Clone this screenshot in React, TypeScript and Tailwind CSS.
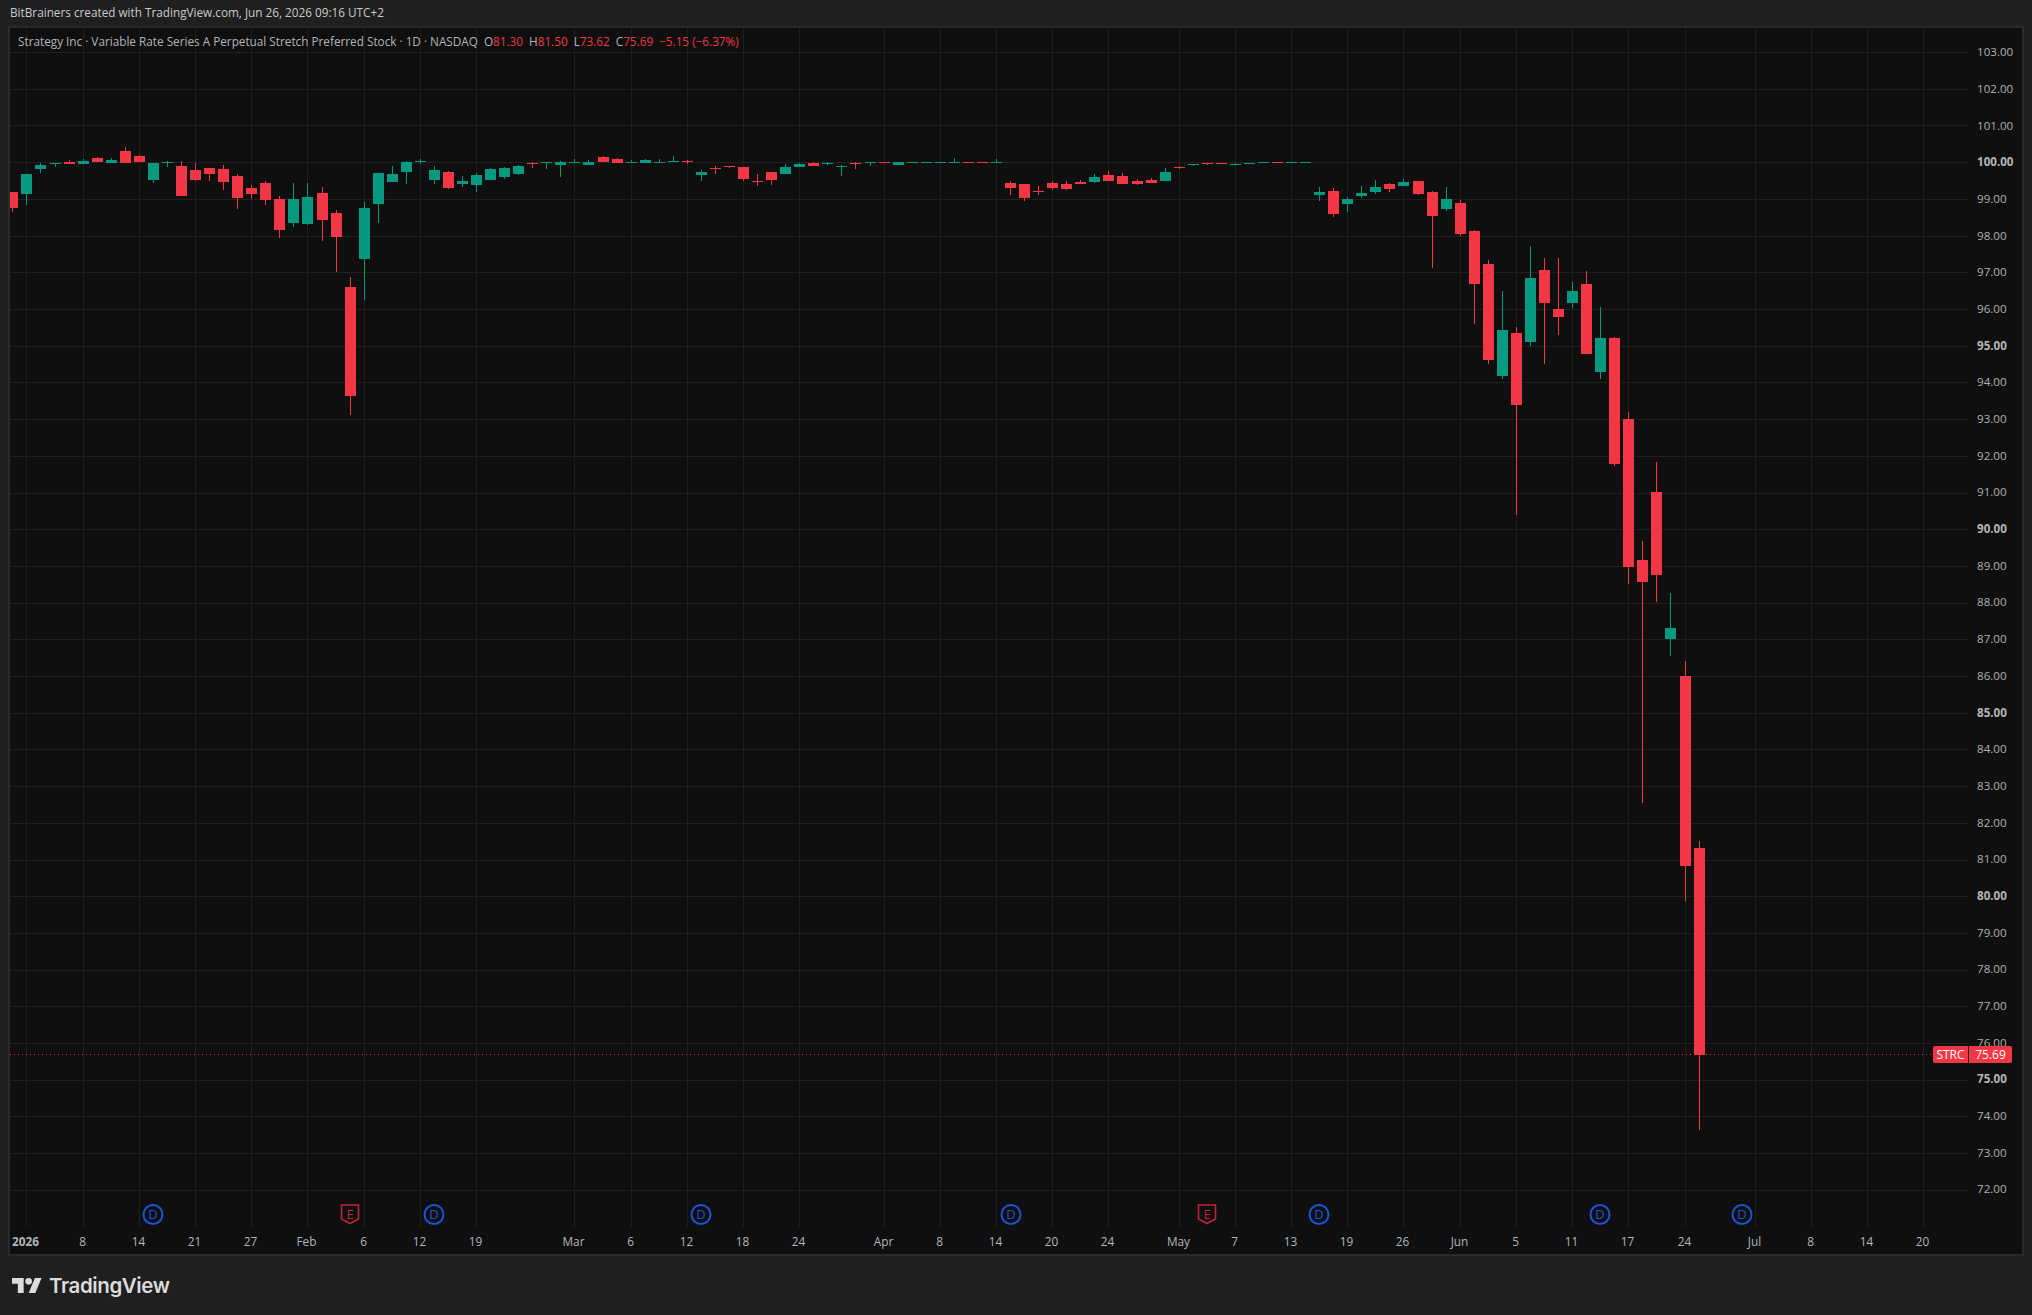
import * as React from 'react'

const RED = '#f23645'
const GREEN = '#089981'

// g/r, wick top, body top, body bottom, wick bottom, in thirds of a px from y=140
type Bar = ['g' | 'r', number, number, number, number]

const BARS: Bar[] = [
  ['r', 156, 156, 204, 216], ['g', 102, 102, 162, 195], ['g', 69, 75, 87, 99], ['g', 69, 69, 72, 81],
  ['r', 60, 66, 72, 72], ['g', 57, 63, 72, 72], ['r', 51, 54, 66, 66], ['g', 54, 60, 69, 69],
  ['r', 21, 33, 69, 69], ['r', 45, 48, 66, 66], ['g', 69, 69, 120, 129], ['g', 63, 66, 69, 81],
  ['r', 63, 78, 168, 168], ['r', 69, 90, 120, 123], ['r', 84, 84, 102, 123], ['r', 75, 87, 126, 150],
  ['r', 102, 108, 174, 207], ['r', 135, 144, 162, 177], ['r', 123, 129, 180, 195], ['r', 168, 177, 270, 294],
  ['g', 129, 177, 249, 261], ['g', 129, 171, 252, 255], ['r', 141, 159, 240, 303], ['r', 210, 219, 291, 396],
  ['r', 411, 441, 768, 825], ['g', 186, 204, 357, 480], ['g', 99, 99, 192, 249], ['g', 78, 102, 126, 126],
  ['g', 63, 66, 96, 132], ['g', 57, 63, 66, 72], ['g', 78, 90, 120, 132], ['r', 93, 96, 144, 147],
  ['g', 108, 123, 132, 141], ['g', 99, 105, 135, 156], ['g', 84, 87, 120, 120], ['g', 81, 84, 111, 117],
  ['g', 75, 78, 102, 105], ['r', 66, 69, 72, 84], ['g', 66, 66, 69, 87], ['g', 63, 66, 75, 111],
  ['g', 57, 66, 69, 69], ['g', 60, 66, 75, 75], ['r', 48, 51, 66, 66], ['r', 54, 57, 69, 69],
  ['g', 60, 66, 69, 69], ['g', 57, 60, 69, 69], ['g', 57, 66, 69, 69], ['g', 48, 63, 66, 66],
  ['r', 60, 63, 66, 72], ['g', 90, 96, 105, 123], ['r', 78, 84, 87, 102], ['r', 78, 78, 81, 84],
  ['r', 81, 81, 117, 123], ['r', 102, 123, 126, 138], ['r', 96, 96, 120, 135], ['g', 72, 81, 102, 102],
  ['g', 69, 72, 81, 81], ['r', 66, 69, 78, 78], ['g', 66, 69, 72, 75], ['g', 75, 78, 81, 108],
  ['r', 66, 69, 72, 87], ['g', 66, 66, 69, 78], ['r', 66, 66, 69, 69], ['g', 66, 66, 75, 75],
  ['g', 66, 66, 69, 69], ['g', 66, 66, 69, 69], ['g', 66, 66, 69, 69], ['g', 54, 66, 69, 69],
  ['r', 66, 66, 69, 69], ['r', 66, 66, 69, 69], ['g', 57, 66, 69, 69], ['r', 123, 129, 144, 165],
  ['r', 132, 132, 174, 183], ['r', 138, 153, 156, 165], ['r', 123, 129, 144, 150], ['r', 123, 132, 147, 150],
  ['r', 120, 126, 132, 132], ['g', 102, 111, 126, 129], ['r', 93, 105, 123, 123], ['r', 99, 108, 132, 132],
  ['r', 117, 123, 132, 135], ['r', 114, 120, 129, 129], ['g', 84, 96, 123, 123], ['r', 78, 81, 84, 87],
  ['g', 72, 72, 75, 78], ['r', 69, 69, 72, 75], ['r', 69, 69, 72, 72], ['g', 69, 72, 75, 75],
  ['g', 69, 69, 72, 72], ['g', 66, 66, 69, 69], ['r', 66, 66, 69, 69], ['g', 66, 66, 69, 69],
  ['g', 66, 66, 69, 69], ['g', 141, 156, 165, 183], ['r', 144, 153, 222, 231], ['g', 171, 177, 192, 216],
  ['g', 138, 159, 168, 174], ['g', 120, 141, 156, 162], ['r', 129, 132, 147, 156], ['g', 117, 126, 138, 138],
  ['r', 123, 123, 162, 165], ['r', 153, 156, 228, 384], ['g', 141, 177, 207, 213], ['r', 180, 189, 282, 288],
  ['r', 270, 273, 432, 552], ['r', 360, 372, 660, 672], ['g', 453, 570, 708, 717], ['r', 561, 579, 795, 1124],
  ['g', 318, 414, 606, 618], ['r', 354, 390, 489, 672], ['r', 354, 507, 531, 585], ['g', 426, 453, 489, 504],
  ['r', 393, 432, 642, 642], ['g', 501, 594, 696, 717], ['r', 591, 594, 972, 978], ['r', 816, 837, 1281, 1332],
  ['r', 1203, 1260, 1326, 1988], ['r', 966, 1056, 1305, 1386], ['g', 1359, 1464, 1497, 1548], ['r', 1563, 1608, 2178, 2283],
  ['r', 2103, 2124, 2744, 2970],
]

// bars sit 14px apart with one extra pixel at these indexes
const STEPS = [3, 22, 42, 61, 80, 100, 119]
const barX = (i: number) => 12.5 + 14 * i + STEPS.filter((s) => i >= s).length
const barY = (z: number) => Math.round(140 + z / 3)

const TICKS: [string, number, boolean?][] = [
  ['2026', 26.5, true], ['8', 83.5], ['14', 139.5], ['21', 195.5], ['27', 251.5], ['Feb', 307.5], ['6', 364.5],
  ['12', 420.5], ['19', 476.5], ['Mar', 574.5], ['6', 631.5], ['12', 687.5], ['18', 743.5], ['24', 799.5],
  ['Apr', 884.5], ['8', 940.5], ['14', 996.5], ['20', 1052.5], ['24', 1108.5], ['May', 1179.5], ['7', 1235.5],
  ['13', 1291.5], ['19', 1347.5], ['26', 1403.5], ['Jun', 1460.5], ['5', 1516.5], ['11', 1572.5], ['17', 1628.5],
  ['24', 1685.5], ['Jul', 1755.5], ['8', 1811.5], ['14', 1867.5], ['20', 1923.5],
]

const PRICES = Array.from({ length: 32 }, (_, i) => 103 - i)
const priceY = (p: number) => Math.floor(162.7 + (100 - p) * 36.7) + 0.5

const DIVIDENDS = [153, 434, 701, 1011, 1319, 1600, 1742]
const EARNINGS = [350, 1207]

const FONT = { fontFamily: '"Open Sans", sans-serif' }

function Candle({ bar, x }: { bar: Bar; x: number }) {
  const [kind, wickTop, top, bottom, wickBottom] = bar
  const color = kind === 'g' ? GREEN : RED
  return (
    <g>
      <rect x={x - 0.5} y={barY(wickTop)} width={1} height={barY(wickBottom) - barY(wickTop)} fill={color} />
      <rect x={x - 5.5} y={barY(top)} width={11} height={Math.max(1, barY(bottom) - barY(top))} fill={color} />
    </g>
  )
}

function ChartCanvas() {
  return (
    <svg viewBox="10 28 1958 1226" className="h-[1226px] w-[1958px] shrink-0">
      {TICKS.map(([label, x]) => (
        <line key={`${label}-${x}`} x1={x} x2={x} y1={28} y2={1227} stroke="#1e1e1e" />
      ))}
      {PRICES.map((p) => (
        <line key={p} x1={10} x2={1968} y1={priceY(p)} y2={priceY(p)} stroke="#202020" />
      ))}
      <line x1={10} x2={1933} y1={1054.5} y2={1054.5} stroke={RED} strokeDasharray="1 3" />
      {BARS.map((bar, i) => (
        <Candle key={i} bar={bar} x={barX(i)} />
      ))}

      {DIVIDENDS.map((x) => (
        <g key={x}>
          <circle cx={x} cy={1214.5} r={9.5} fill="none" stroke="#1b54d8" strokeWidth={2} />
          <text x={x} y={1219} textAnchor="middle" fontSize={13} fill="#1b54d8" style={FONT}>
            D
          </text>
        </g>
      ))}
      {EARNINGS.map((x) => (
        <g key={x}>
          <path
            d={`M${x - 8.5} 1205h17v14l-8.5 4.5l-8.5 -4.5z`}
            fill="none"
            stroke="#c2233a"
            strokeWidth={1.6}
          />
          <text x={x} y={1219} textAnchor="middle" fontSize={13} fill="#c2233a" style={FONT}>
            E
          </text>
        </g>
      ))}

      {TICKS.map(([label, x, bold]) => (
        <text
          key={`t-${label}-${x}`}
          x={x - 1}
          y={1245.5}
          textAnchor="middle"
          fontSize={11.8}
          fontWeight={bold ? 700 : 400}
          fill="#b4b6bb"
          style={FONT}
        >
          {label}
        </text>
      ))}
    </svg>
  )
}

function PriceAxis() {
  return (
    <div className="flex w-[54px] shrink-0 flex-col pt-[5.5px] pl-[9px] font-['Open_Sans',sans-serif] text-[11.6px] text-[#aeb0b5]">
      {PRICES.map((p) => (
        <div
          key={p}
          className={`flex h-[36.7px] shrink-0 items-center ${p % 5 === 0 ? 'font-bold text-[#b4b6ba]' : ''}`}
        >
          {p.toFixed(2)}
        </div>
      ))}
    </div>
  )
}

function Legend() {
  return (
    <div className="absolute top-[4px] left-[8px] flex gap-[6px] font-['Open_Sans',sans-serif] text-[11.75px] leading-[18px] text-[#b2b4b9]">
      <span>Strategy Inc · Variable Rate Series A Perpetual Stretch Preferred Stock · 1D · NASDAQ</span>
      <span>
        O<span className="text-[#f23645]">81.30</span>
      </span>
      <span>
        H<span className="text-[#f23645]">81.50</span>
      </span>
      <span>
        L<span className="text-[#f23645]">73.62</span>
      </span>
      <span>
        C<span className="text-[#f23645]">75.69</span>
      </span>
      <span className="text-[#f23645]">−5.15 (−6.37%)</span>
    </div>
  )
}

function LastPrice() {
  return (
    <div className="absolute top-[1018px] left-[1923px] flex h-[17px] gap-[1px] font-['Open_Sans',sans-serif] text-[12px] leading-[17px] text-white">
      <span className="w-[35px] rounded-l-[2px] bg-[#f23645] text-center">STRC</span>
      <span className="w-[43px] rounded-r-[2px] bg-[#f23645] text-center">75.69</span>
    </div>
  )
}

export default function App() {
  return (
    <div className="flex h-[1315px] w-[2032px] flex-col overflow-hidden bg-[#1f1f1f]">
      <div className="flex h-[26px] shrink-0 items-center pl-[10px] font-['Open_Sans',sans-serif] text-[11.75px] text-[#cacaca]">
        BitBrainers created with TradingView.com, Jun 26, 2026 09:16 UTC+2
      </div>

      <div className="relative ml-[8px] flex h-[1230px] w-[2016px] shrink-0 border-2 border-[#2a2a2a] bg-[#0f0f0f]">
        <ChartCanvas />
        <PriceAxis />
        <Legend />
        <LastPrice />
      </div>

      <div className="flex items-center gap-[7px] pt-[21px] pl-[12px]">
        <svg viewBox="0 4 36 18" className="h-[15px] w-[30px] fill-[#dcdcdc]">
          <path d="M14 22H7V11H0V4h14v18zM28 22h-8l7.5-18h8L28 22z" />
          <circle cx="20" cy="8" r="4" />
        </svg>
        <span className="font-['Inter',sans-serif] text-[20.5px] leading-[17px] font-semibold tracking-[-0.4px] text-[#dcdcdc]">
          TradingView
        </span>
      </div>
    </div>
  )
}
